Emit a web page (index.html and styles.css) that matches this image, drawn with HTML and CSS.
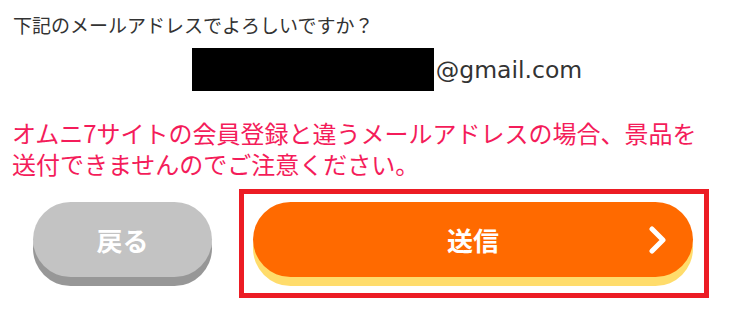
FILE: index.html
```html
<!DOCTYPE html>
<html lang="ja">
<head>
    <meta charset="UTF-8">
    <meta name="viewport" content="width=device-width, initial-scale=1.0">
    <title>メールアドレス確認</title>
    <link rel="stylesheet" href="styles.css">
</head>
<body>
    <div class="confirm">
        <p class="question">下記のメールアドレスでよろしいですか？</p>
        <div class="email">
            <span class="masked"></span>
            <span class="domain">@gmail.com</span>
        </div>
        <p class="notice">オムニ7サイトの会員登録と違うメールアドレスの場合、景品を送付できませんのでご注意ください。</p>
        <div class="actions">
            <button class="btn btn-back">戻る</button>
            <div class="highlight">
                <button class="btn btn-send">
                    送信
                    <svg class="chevron" width="20" height="28" viewBox="0 0 20 28">
                        <path d="M4 3 L15 14 L4 25" fill="none" stroke="#fff" stroke-width="5" stroke-linecap="round" stroke-linejoin="round"/>
                    </svg>
                </button>
            </div>
        </div>
    </div>
</body>
</html>
```

FILE: styles.css
```css
body {
    margin: 0;
    padding: 0;
    background-color: #fff;
    color: #333;
    font-family: 'Noto Sans CJK JP', 'Noto Sans', sans-serif;
}

.confirm {
    width: 740px;
    padding-top: 12px;
}

.question {
    margin: 0 0 0 13px;
    font-size: 19px;
    line-height: 26px;
}

.email {
    display: flex;
    align-items: center;
    justify-content: center;
    padding-left: 34px;
    margin-top: 10px;
}

.masked {
    display: inline-block;
    width: 242px;
    height: 43px;
    background-color: #000;
}

.domain {
    margin-left: 2px;
    font-family: 'DejaVu Sans', Verdana, sans-serif;
    font-size: 23.5px;
    color: #333;
}

.notice {
    width: 700px;
    margin: 26px 0 0 12px;
    font-size: 24px;
    line-height: 31px;
    color: #f41c5a;
}

.actions {
    display: flex;
    align-items: flex-start;
    margin-top: 10px;
    padding-left: 33px;
}

.btn {
    position: relative;
    height: 75px;
    border: none;
    border-radius: 38px;
    font-family: 'Noto Sans CJK JP', sans-serif;
    font-size: 26px;
    font-weight: bold;
    color: #fff;
    cursor: pointer;
    outline: none;
}

.btn-back {
    width: 179px;
    margin-top: 13px;
    background-color: #c3c3c3;
    box-shadow: 0 9px 0 #979797;
}

.highlight {
    margin-left: 27px;
    border: 5px solid #ec1c24;
    padding: 8px 11px 16px 9px;
}

.btn-send {
    display: block;
    width: 440px;
    background-color: #ff6a00;
    box-shadow: 0 9px 0 #ffdc6b;
}

.chevron {
    position: absolute;
    right: 25px;
    top: 24px;
}
```
